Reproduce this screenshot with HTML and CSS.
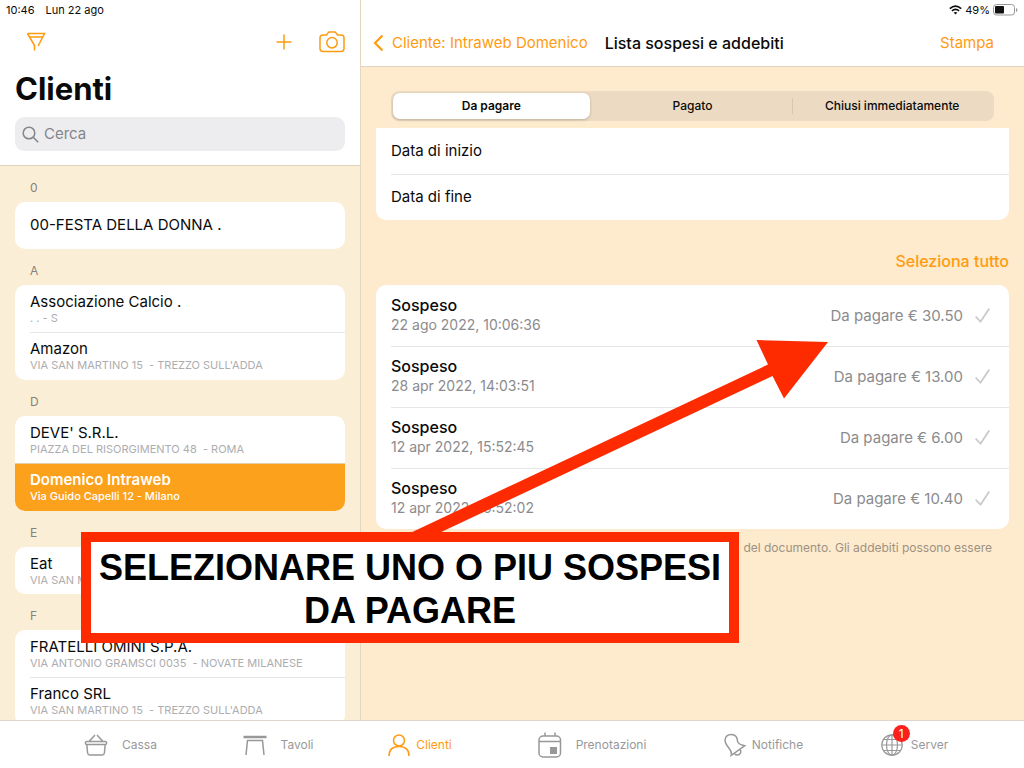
FILE: index.html
```html
<!DOCTYPE html>
<html lang="it">
<head>
<meta charset="utf-8">
<meta name="viewport" content="width=device-width, initial-scale=1">
<title>Clienti</title>
<link rel="stylesheet" href="styles.css">
</head>
<body>
<div class="app">
  <aside class="sidebar">
    <header class="sidebar-head">
      <div class="status"><span>10:46</span><span>Lun 22 ago</span></div>
      <div class="tools">
        <button class="icon-btn filter" aria-label="Filtra"><svg width="20" height="20" viewBox="0 0 20 20"><path d="M1.500 1.500h17L12.200 14M1.500 1.500L8.500 13.500v5M3.500 5h13"/></svg></button>
        <button class="icon-btn" aria-label="Aggiungi"><svg width="16" height="16" viewBox="0 0 16 16"><path d="M8 .5v15M.5 8h15"/></svg></button>
        <button class="icon-btn" aria-label="Fotocamera"><svg width="26" height="22" viewBox="0 0 26 22"><path d="M4 4h3.500l1.500-2.200q.5-.8 1.500-.8h5q1 0 1.500.8L18.500 4H22q3 0 3 3v10.500q0 3-3 3H4q-3 0-3-3V7q0-3 3-3z"/><circle cx="13" cy="11.700" r="5.200"/></svg></button>
      </div>
      <h1 class="title">Clienti</h1>
      <label class="search">
        <svg width="17" height="17" viewBox="0 0 17 17"><circle cx="7" cy="7" r="5.800"/><path d="M11.200 11.200l5 5"/></svg>
        <input type="search" placeholder="Cerca" aria-label="Cerca">
      </label>
    </header>
    <div class="clients">
      <h2 class="letter">0</h2>
      <div class="card">
        <button class="client"><span class="name">00-FESTA DELLA DONNA .</span></button>
      </div>
      <h2 class="letter">A</h2>
      <div class="card">
        <button class="client"><span class="name">Associazione Calcio .</span><span class="address">. . - S</span></button>
        <button class="client"><span class="name">Amazon</span><span class="address">VIA SAN MARTINO 15 &nbsp;- TREZZO SULL'ADDA</span></button>
      </div>
      <h2 class="letter">D</h2>
      <div class="card">
        <button class="client"><span class="name">DEVE' S.R.L.</span><span class="address">PIAZZA DEL RISORGIMENTO 48 &nbsp;- ROMA</span></button>
        <button class="client selected"><span class="name">Domenico Intraweb</span><span class="address">Via Guido Capelli 12 - Milano</span></button>
      </div>
      <h2 class="letter">E</h2>
      <div class="card">
        <button class="client"><span class="name">Eat</span><span class="address">VIA SAN M</span></button>
      </div>
      <h2 class="letter">F</h2>
      <div class="card">
        <button class="client"><span class="name">FRATELLI OMINI S.P.A.</span><span class="address">VIA ANTONIO GRAMSCI 0035 &nbsp;- NOVATE MILANESE</span></button>
        <button class="client"><span class="name">Franco SRL</span><span class="address">VIA SAN MARTINO 15 &nbsp;- TREZZO SULL'ADDA</span></button>
      </div>
    </div>
  </aside>

  <main class="detail">
    <header class="detail-head">
      <div class="status status-right">
        <svg width="13" height="10" viewBox="0 0 13 10"><path class="wave" d="M.8 3.600q5.700-5 11.400 0M2.900 5.900q3.600-3 7.200 0"/><path class="dot" d="M4.600 7.600q1.900-1.400 3.800 0L6.500 9.600z"/></svg>
        <span>49%</span>
        <svg width="25" height="12" viewBox="0 0 25 12"><rect class="shell" x=".5" y=".5" width="21" height="10.500" rx="3"/><rect class="dot" x="2" y="2" width="9" height="7.500" rx="1"/><path class="tip" d="M23 4v4q1.500-.5 1.500-2T23 4z"/></svg>
      </div>
      <nav class="nav">
        <a class="back" href="#"><svg width="11" height="18" viewBox="0 0 11 18"><path d="M9.500 1.500L2 9l7.500 7.500"/></svg>Cliente: Intraweb Domenico</a>
        <strong class="nav-title">Lista sospesi e addebiti</strong>
        <button class="print">Stampa</button>
      </nav>
    </header>

    <div class="content">
      <div class="segments">
        <button class="segment active">Da pagare</button>
        <button class="segment">Pagato</button>
        <button class="segment divided">Chiusi immediatamente</button>
      </div>
      <div class="card dates">
        <button class="date">Data di inizio</button>
        <button class="date">Data di fine</button>
      </div>
      <button class="select-all">Seleziona tutto</button>
      <div class="card">
        <label class="entry"><span class="entry-info"><b>Sospeso</b><span class="when">22 ago 2022, 10:06:36</span></span><span>Da pagare € 30.50</span><input class="tick" type="checkbox"></label>
        <label class="entry"><span class="entry-info"><b>Sospeso</b><span class="when">28 apr 2022, 14:03:51</span></span><span>Da pagare € 13.00</span><input class="tick" type="checkbox"></label>
        <label class="entry"><span class="entry-info"><b>Sospeso</b><span class="when">12 apr 2022, 15:52:45</span></span><span>Da pagare € 6.00</span><input class="tick" type="checkbox"></label>
        <label class="entry"><span class="entry-info"><b>Sospeso</b><span class="when">12 apr 2022, 15:52:02</span></span><span>Da pagare € 10.40</span><input class="tick" type="checkbox"></label>
      </div>
      <p class="note">del documento. Gli addebiti possono essere</p>
    </div>
  </main>

  <nav class="tabs">
    <a class="tab wide" href="#"><svg width="24" height="24" viewBox="0 0 24 24"><path d="M2.500 8.500h19q1 0 1 1v1q0 1-1 1h-19q-1 0-1-1v-1q0-1 1-1zM2.800 11.500l.8 8.500q.3 2 2.200 2h12.400q1.900 0 2.200-2l.8-8.500M5 8.500L11 2M19 8.500L13 2"/></svg>Cassa</a>
    <a class="tab wide" href="#"><svg width="24" height="24" viewBox="0 0 24 24"><path class="top" d="M.5 4h23"/><path d="M3 22L4.500 7.500h15L21 22"/></svg>Tavoli</a>
    <a class="tab current" href="#"><svg width="22" height="24" viewBox="0 0 22 24"><circle cx="11" cy="7.500" r="5.500"/><path d="M1 23q0-9.500 10-9.500T21 23"/></svg>Clienti</a>
    <a class="tab wide" href="#"><svg width="24" height="26" viewBox="0 0 24 26"><rect x="1" y="4" width="21.500" height="21" rx="4"/><path d="M1 9.500h21.500M7 .5V4M17 .5V4"/><rect class="fill" x="12" y="15" width="7" height="7"/></svg>Prenotazioni</a>
    <a class="tab" href="#"><svg width="22" height="24" viewBox="0 0 22 24"><path d="M7.300 22.300C8 19.500 7 17.500 4.500 14.500 2 11.500 1 9.500 1 7 1 3.500 4 1.300 7.500 1.500c3.800.2 5.800 3 6 6.500.2 2.500 2.500 3.800 7.300 4.700zM10.500 20.500c1.500 2.300 5 2 6-.5.400-1 .3-2.200-.2-3.200"/></svg>Notifiche</a>
    <a class="tab" href="#"><span class="globe"><svg width="22" height="24" viewBox="0 0 22 24"><circle cx="11" cy="12" r="10.200"/><ellipse cx="11" cy="12" rx="5.500" ry="10.200"/><path d="M11 1.800v20.400M.8 12h20.400M2.500 6.500h17M2.500 17.500h17"/></svg><span class="badge">1</span></span>Server</a>
  </nav>

  <svg class="arrow" width="420" height="194" viewBox="0 0 420 194"><path d="M0 194L360 24.500 348.500 0 420 2 376 58.500 364.500 36 29 194z"/></svg>
  <div class="callout">SELEZIONARE UNO O PIU SOSPESI<br>DA PAGARE</div>
</div>
</body>
</html>
```
FILE: styles.css
```css
* {
  box-sizing: border-box;
}

body {
  margin: 0;
  font-family: Inter, "Liberation Sans", sans-serif;
  font-size: 15px;
  line-height: 20px;
  color: #0a0a0a;
}

button,
input {
  margin: 0;
  padding: 0;
  border: 0;
  background: none;
  font: inherit;
  color: inherit;
}

a {
  color: inherit;
  text-decoration: none;
}

svg {
  flex: none;
  fill: none;
  stroke: currentColor;
  stroke-width: 1.5;
}

.app {
  position: relative;
  display: grid;
  grid-template: minmax(0, 1fr) auto / 361px minmax(0, 1fr);
  height: 100vh;
  overflow: hidden;
}

/* Client list */
.sidebar {
  display: flex;
  flex-direction: column;
  min-height: 0;
  border-right: 1px solid #e3d7c2;
  background: #fbeed6;
}

.sidebar-head {
  padding-bottom: 14px;
  border-bottom: 1px solid #dfd3be;
  background: #fff;
}

.status {
  display: flex;
  gap: 11px;
  height: 20px;
  padding: 0 6px;
  font-size: 11px;
}

.tools {
  display: flex;
  align-items: center;
  gap: 27px;
  height: 44px;
  padding: 0 15px 0 26px;
  color: #ff9b10;
}

.icon-btn {
  display: flex;
  color: inherit;
}

.filter {
  margin-right: auto;
}

.title {
  margin: 5px 15px 8px;
  font-size: 31px;
  line-height: 40px;
  font-weight: 700;
}

.search {
  display: flex;
  align-items: center;
  gap: 5px;
  height: 34px;
  margin: 0 15px;
  padding: 0 7px;
  border-radius: 9px;
  background: #ededef;
  color: #85858a;
}

.search input {
  flex: 1;
  min-width: 0;
  outline: 0;
}

.search input::placeholder {
  color: #85858a;
}

.clients {
  flex: 1;
  min-height: 0;
  padding: 0 15px;
  overflow: hidden;
}

.letter {
  margin: 0;
  padding: 12px 15px 4px;
  font-size: 12px;
  font-weight: 400;
  color: #86827b;
}

.card {
  overflow: hidden;
  border-radius: 10px;
  background: #fff;
}

.client {
  position: relative;
  display: flex;
  flex-direction: column;
  justify-content: center;
  width: 100%;
  height: 47px;
  padding: 0 15px 1px;
  text-align: left;
}

.client + .client {
  height: 48px;
}

.client + .client::before,
.date + .date::before,
.entry + .entry::before {
  content: "";
  position: absolute;
  top: 0;
  right: 0;
  left: 15px;
  height: 1px;
  background: #e6e6e7;
}

.client + .selected::before {
  left: 0;
  background: #e6cfa8;
}

.address {
  font-size: 11px;
  line-height: 13px;
  color: #adadaf;
}

.selected {
  background: #fca11b;
  color: #fff;
  font-weight: 600;
}

.selected .address {
  font-weight: 500;
  color: #fff;
}

/* Detail pane */
.detail {
  min-height: 0;
  overflow: hidden;
  background: #feeacd;
}

.detail-head {
  border-bottom: 1px solid #dfd3be;
  background: #fff;
}

.status-right {
  justify-content: flex-end;
  align-items: center;
  gap: 3px;
}

.wave {
  stroke-width: 1.6;
}

.dot {
  fill: #111;
  stroke: none;
}

.shell {
  stroke: #999;
  stroke-width: 1;
}

.tip {
  fill: #999;
  stroke: none;
}

.nav {
  display: flex;
  align-items: center;
  gap: 17px;
  height: 46px;
  padding: 0 30px 0 12px;
}

.back {
  display: flex;
  align-items: center;
  gap: 8px;
  color: #ff9b10;
}

.back svg {
  stroke-width: 2.2;
}

.nav-title {
  font-size: 16px;
  font-weight: 500;
}

.print {
  margin-left: auto;
  color: #ff9b10;
}

.content {
  padding: 24px 15px;
}

.segments {
  display: grid;
  grid-template-columns: repeat(3, 1fr);
  height: 30px;
  margin: 0 15px 7px;
  padding: 2px;
  border-radius: 8px;
  background: #ecdbc2;
  font-size: 12px;
}

.segment {
  position: relative;
  border-radius: 7px;
  font-weight: 500;
}

.active {
  margin-right: 3px;
  background: #fff;
  font-weight: 600;
  box-shadow: 0 1px 3px rgba(0, 0, 0, 0.2);
}

.divided::before {
  content: "";
  position: absolute;
  top: 5px;
  bottom: 5px;
  left: 0;
  width: 1px;
  background: #d8c8b2;
}

.dates {
  border-radius: 0 0 10px 10px;
}

.date {
  position: relative;
  display: block;
  width: 100%;
  height: 46px;
  padding: 0 15px;
  text-align: left;
}

.select-all {
  display: block;
  margin: 31px 0 14px auto;
  font-size: 16px;
  font-weight: 500;
  color: #ff9b10;
}

.entry {
  position: relative;
  display: flex;
  align-items: center;
  gap: 12px;
  height: 61px;
  padding: 0 19px 0 15px;
  color: #8b8b8d;
}

.entry-info {
  display: flex;
  flex-direction: column;
  margin-right: auto;
  padding-bottom: 2px;
}

.entry-info b {
  font-size: 16px;
  font-weight: 500;
  color: #0a0a0a;
}

.when {
  font-size: 14px;
}

.tick {
  width: 15px;
  height: 15px;
  appearance: none;
  background: #cacacc;
  clip-path: polygon(0 62%, 8% 54%, 36% 82%, 90% 0, 100% 6%, 38% 100%);
}

.tick:checked {
  background: #ff9b10;
}

.note {
  margin: 9px 17px 0;
  font-size: 12px;
  text-align: right;
  color: #9d9282;
}

/* Tab bar */
.tabs {
  grid-column: 1 / -1;
  display: grid;
  grid-template-columns: 153fr 162fr 122fr 222fr 121fr 181fr;
  height: 48px;
  padding: 0 19px 0 44px;
  border-top: 1px solid #dcd6cc;
  background: #fff;
  font-size: 12px;
  color: #98989a;
}

.tab {
  display: flex;
  align-items: center;
  justify-content: center;
  gap: 6px;
}

.wide {
  gap: 14px;
}

.current {
  color: #ff9b10;
}

.top {
  stroke-width: 2.5;
}

.fill {
  fill: currentColor;
  stroke: none;
}

.globe {
  position: relative;
  display: flex;
  margin-right: 2px;
}

.globe svg {
  stroke-width: 1.2;
}

.badge {
  position: absolute;
  top: -8px;
  right: -7px;
  width: 17px;
  border-radius: 9px;
  background: #fb2019;
  color: #fff;
  line-height: 17px;
  text-align: center;
}

/* Instruction laid over the screen */
.arrow {
  position: absolute;
  top: 340px;
  left: 408px;
  fill: #ff2b00;
  stroke: none;
  pointer-events: none;
}

.callout {
  position: absolute;
  top: 532px;
  left: 81px;
  padding: 4px 8px 1px;
  border: 10px solid #ff2b00;
  background: #fff;
  color: #000;
  font: 700 36px/43px "Liberation Sans", sans-serif;
  text-align: center;
  white-space: nowrap;
}
```
